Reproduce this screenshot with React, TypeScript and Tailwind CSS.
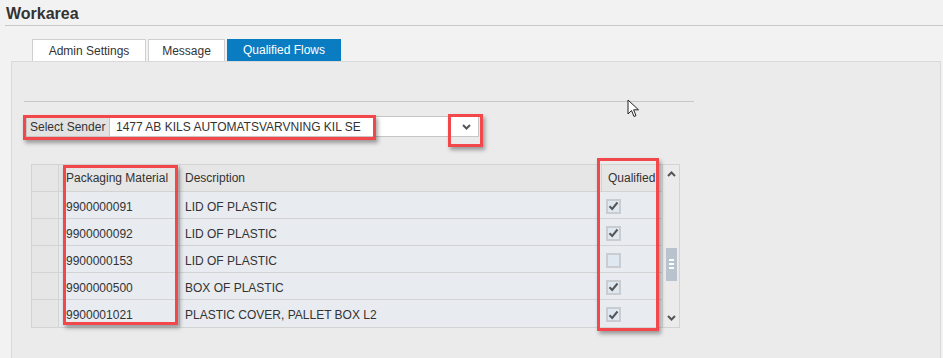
import React from "react";

const rows = [
  { id: "9900000091", desc: "LID OF PLASTIC", q: true },
  { id: "9900000092", desc: "LID OF PLASTIC", q: true },
  { id: "9900000153", desc: "LID OF PLASTIC", q: false },
  { id: "9900000500", desc: "BOX OF PLASTIC", q: true },
  { id: "9900001021", desc: "PLASTIC COVER, PALLET BOX L2", q: true },
];

function Check({ on }: { on: boolean }) {
  return (
    <div className="w-[15px] h-[15px] border-2 border-[#c9cdd1] bg-[#dfe8f1] flex items-center justify-center">
      {on && (
        <svg width="11" height="10" viewBox="0 0 11 10">
          <path d="M1.5 5.2 L4.2 8 L9.5 1.5" stroke="#555" strokeWidth="2" fill="none" />
        </svg>
      )}
    </div>
  );
}

function Chevron({ up }: { up?: boolean }) {
  return (
    <svg width="9" height="6" viewBox="0 0 9 6">
      <path d={up ? "M1 5 L4.5 1.5 L8 5" : "M1 1 L4.5 4.5 L8 1"} stroke="#555" strokeWidth="2" fill="none" />
    </svg>
  );
}

export default function App() {
  const red = "absolute border-[3px] border-[#f2484b] shadow-[2px_3px_4px_rgba(0,0,0,0.35)]";
  return (
    <div
      className="relative w-[943px] h-[358px] overflow-hidden bg-[#f2f2f2] text-[#333]"
      style={{ fontFamily: '"Liberation Sans", Arial, sans-serif' }}
    >
      <div className="h-[26px] ml-[5px] border-b border-[#c8c8c8] pt-[5px] pl-[1px] text-[16px] font-bold leading-[18px] text-[#333]">
        Workarea
      </div>
      <div className="flex gap-[2px] ml-[32px] mt-[13px] h-[22px] text-[12px] leading-[23px]">
        <div className="w-[114px] bg-white border border-b-0 border-[#cfcfcf] text-center">Admin Settings</div>
        <div className="w-[77px] bg-white border border-b-0 border-[#cfcfcf] text-center">Message</div>
        <div className="w-[114px] bg-[#0a7cc1] text-white text-center">Qualified Flows</div>
      </div>
      <div className="ml-[11px] w-[930px] h-[320px] border border-[#d9d9d9] bg-[#ebebeb]">
        <div className="ml-[12px] mt-[39px] w-[670px] h-px bg-[#c8c8c8]" />
        <div className="ml-[14px] mt-[14px] flex h-[21px] text-[12px]">
          <div className="w-[84px] bg-[#e2e2e2] border border-[#c6c6c6] pl-[3px] leading-[20px]">Select Sender</div>
          <div className="w-[369px] bg-white border border-l-0 border-[#c6c6c6] pl-[6px] leading-[20px] flex items-center justify-between pr-[7px]">
            <span>1477 AB KILS AUTOMATSVARVNING KIL SE</span>
            <Chevron />
          </div>
        </div>
        <div className="ml-[19px] mt-[27px] flex w-[649px] border border-[#d3d3d3] text-[12px]">
          <div className="flex-1">
            <div className="flex h-[27px] bg-[#e6e6e6] border-b border-[#d3d3d3] items-center">
              <div className="w-[27px] h-full border-r border-[#d3d3d3]" />
              <div className="w-[121px] pl-[7px] border-r border-[#d3d3d3] h-full flex items-center">Packaging Material</div>
              <div className="w-[421px] pl-[5px] h-full flex items-center">Description</div>
              <div className="w-[61px] pl-[6px] border-l border-[#d3d3d3] h-full flex items-center">Qualified</div>
            </div>
            {rows.map((r, i) => (
              <div key={r.id} className={`flex h-[27px] bg-[#e8ebef] items-center ${i < rows.length - 1 ? "border-b border-[#d3d3d3]" : ""}`}>
                <div className="w-[27px] h-full bg-[#e6e6e6] border-r border-[#d3d3d3]" />
                <div className="w-[121px] pl-[7px] pt-[3px] h-full flex items-center border-r border-[#d3d3d3]">{r.id}</div>
                <div className="w-[421px] pl-[5px] pt-[3px] h-full flex items-center">{r.desc}</div>
                <div className="w-[61px] pl-[5px] pt-[2px] h-full flex items-center">
                  <Check on={r.q} />
                </div>
              </div>
            ))}
          </div>
          <div className="w-[18px] border-l border-[#d3d3d3] bg-[#ebebeb] flex flex-col items-center justify-between py-[6px]">
            <Chevron up />
            <div className="w-[11px] h-[33px] bg-[#b8c3ce] flex flex-col items-center justify-center gap-[2px] mt-[62px]">
              <div className="w-[5px] h-[2px] bg-white" />
              <div className="w-[5px] h-[2px] bg-white" />
              <div className="w-[5px] h-[2px] bg-white" />
            </div>
            <div className="mt-[26px]"><Chevron /></div>
          </div>
        </div>
      </div>

      <div className={red} style={{ left: 23, top: 115, width: 353, height: 25 }} />
      <div className={red} style={{ left: 448, top: 114, width: 35, height: 33 }} />
      <div className={red} style={{ left: 63, top: 165, width: 115, height: 160 }} />
      <div className={red} style={{ left: 597, top: 158, width: 62, height: 173 }} />

      <svg className="absolute" style={{ left: 627, top: 99 }} width="14" height="20" viewBox="0 0 14 20">
        <path d="M1 1 L1 15 L4.5 11.5 L7 17.5 L9 16.6 L6.6 10.8 L11.5 10.8 Z" fill="white" stroke="#222" strokeWidth="1" />
      </svg>
    </div>
  );
}
